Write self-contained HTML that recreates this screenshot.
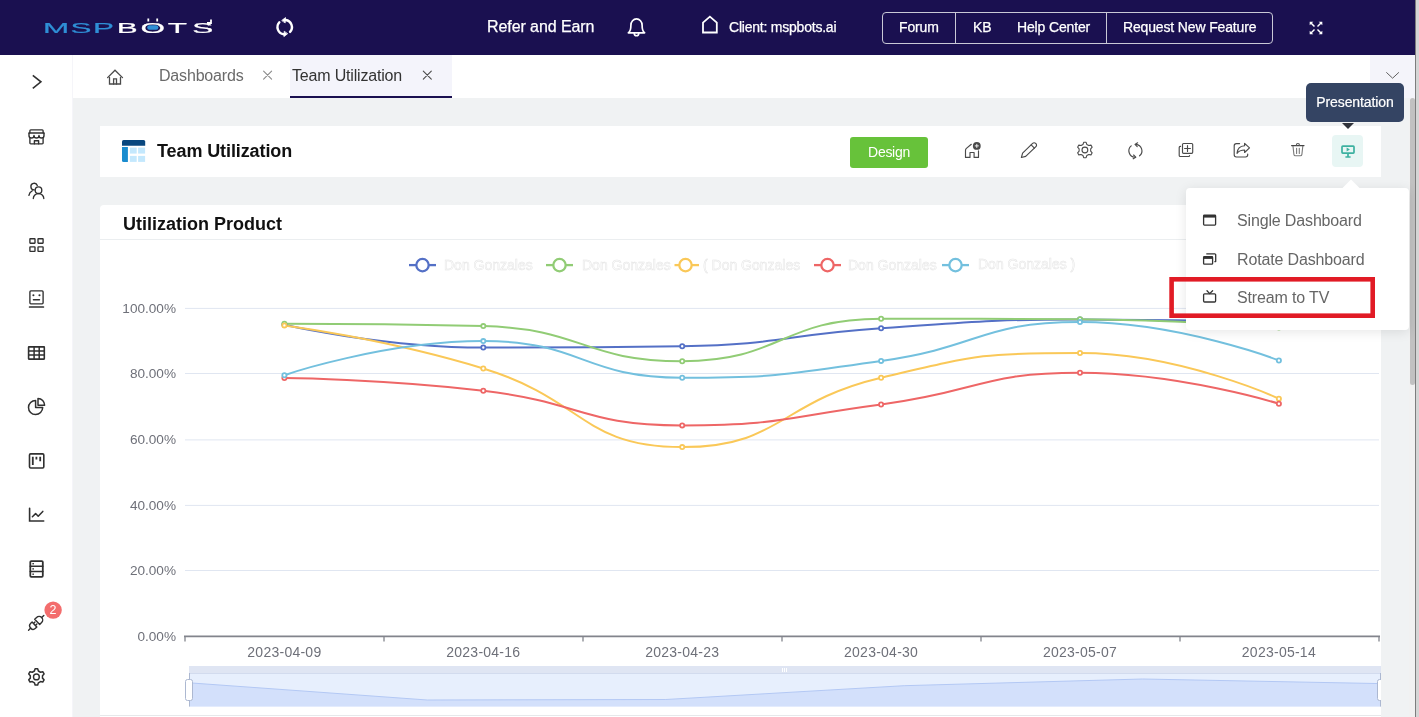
<!DOCTYPE html>
<html lang="en">
<head>
<meta charset="utf-8">
<title>Team Utilization - MSPbots</title>
<style>
*{box-sizing:border-box;margin:0;padding:0}
html,body{width:1419px;height:717px;overflow:hidden;background:#fff;font-family:"Liberation Sans",sans-serif;color:#333}
#app{position:relative;width:1419px;height:717px;overflow:hidden;background:#f0f2f3;will-change:transform}
.abs{position:absolute}
/* header */
#hdr{position:absolute;left:0;top:0;width:1415px;height:55px;background:#1a1050;color:#fff}
#hdr .t{position:absolute;white-space:nowrap;color:#fff;letter-spacing:-0.15px;-webkit-text-stroke:.25px #fff}
#btns{position:absolute;left:882px;top:12px;width:391px;height:32px;border:1px solid #c9c9d6;border-radius:4px}
#btns .dv{position:absolute;top:0;width:1px;height:30px;background:#c9c9d6}
/* right edge */
#redge{position:absolute;left:1415px;top:0;width:4px;height:717px;background:#d5d5d5;border-left:1px solid #7d7d7d}
/* sidebar */
#side{position:absolute;left:0;top:55px;width:73px;height:662px;background:#fff;border-right:1px solid #f5f5f9}
#side svg{position:absolute;left:26px;width:20px;height:20px;fill:none;stroke:#333;stroke-width:1.4;stroke-linecap:round;stroke-linejoin:round}
/* tabs */
#tabs{position:absolute;left:73px;top:55px;width:1342px;height:43px;background:#fff}
#tabs .t{position:absolute;top:11px;font-size:16px;line-height:20px;white-space:nowrap;color:#6a6a6a;letter-spacing:-0.18px}
#tabs .x{position:absolute;top:13px;width:12px;height:12px}
#tabact{position:absolute;left:217px;top:0;width:162px;height:43px;background:#f4f4fb;border-bottom:2px solid #1a1050}
#tabmore{position:absolute;left:1297px;top:0;width:45px;height:43px;background:#f4f4fa}
/* cards */
.card{position:absolute;background:#fff}
#c1{left:100px;top:126px;width:1281px;height:51px}
#c2{left:100px;top:205px;width:1281px;height:512px;border-radius:4px 4px 0 0}
#c2:after{content:"";position:absolute;left:0;top:510px;width:100%;height:1px;background:#e6e8ea}
#c2h{position:absolute;left:0;top:0;width:100%;height:35px;border-bottom:1px solid #ebeef0}
h1{position:absolute;left:57px;top:14px;font-size:18px;line-height:22px;font-weight:bold;color:#111;white-space:nowrap;letter-spacing:-0.1px}
h2{position:absolute;left:23px;top:8px;font-size:18px;line-height:22px;font-weight:bold;color:#111;white-space:nowrap}
#design{position:absolute;left:750px;top:11px;width:78px;height:31px;background:#67c23a;border-radius:3px;color:#fff;font-size:14px;line-height:31px;text-align:center;letter-spacing:-0.3px}
.tb{position:absolute;top:15px;width:20px;height:20px;fill:none;stroke:#555;stroke-width:1.2;stroke-linecap:round;stroke-linejoin:round}
#pres{position:absolute;left:1232px;top:9px;width:31px;height:32px;background:#e8f6f4;border-radius:4px}
/* tooltip */
#tip{position:absolute;left:1306px;top:83px;width:98px;height:39px;background:#344463;border-radius:5px;color:#fff;font-size:14px;line-height:39px;text-align:center;letter-spacing:-0.1px;-webkit-text-stroke:.2px #fff}
#tip:after{content:"";position:absolute;left:36px;top:40px;border:6px solid transparent;border-top:6px solid #30333b;border-bottom:0}
/* dropdown */
#dd{position:absolute;left:1186px;top:188px;width:223px;height:142px;background:#fff;border-radius:4px;box-shadow:0 2px 12px rgba(0,0,0,.10)}
#dd:before{content:"";position:absolute;left:159px;top:-6px;width:12px;height:12px;background:#fff;transform:rotate(45deg)}
#dd .i{position:absolute;left:51px;font-size:16px;line-height:20px;color:#666;white-space:nowrap;letter-spacing:-0.15px}
#dd svg{position:absolute;left:16px;width:16px;height:16px;fill:none;stroke:#444;stroke-width:1.3}
#red{position:absolute;left:1169px;top:278px;width:205px;height:39px;border:4px solid #dc1f26}
/* scrollbar */
#sbt{position:absolute;left:1409px;top:98px;width:6px;height:619px;background:#f1f1f1}
#sb{position:absolute;left:1410px;top:98px;width:5px;height:287px;background:#c1c1c1;border-radius:3px}
</style>
</head>
<body>
<div id="app">

<!-- HEADER -->
<div id="hdr">
  <svg class="abs" style="left:0;top:0" width="230" height="55" viewBox="0 0 230 55" font-family="Liberation Sans, sans-serif" font-size="15.2" stroke-width=".35" vector-effect="non-scaling-stroke">
    <text transform="scale(2.07 1)" y="32.7" stroke-width=".35"><tspan x="20.79 34.01 44.92" fill="#2f8fd6" stroke="#2f8fd6" vector-effect="non-scaling-stroke">MSP</tspan><tspan x="56.37 67.89 81.09 92.83" fill="#fff" stroke="#fff" vector-effect="non-scaling-stroke">BOTS</tspan></text>
    <rect x="147.2" y="25.3" width="11.2" height="4.4" rx="2.2" fill="#2f8fd6"/>
    <path d="M148.3 21.6V18.6M157.2 21.6V18.6M207 23H211V19.6" stroke="#fff" stroke-width="1.8" fill="none"/>
  </svg>
  <div class="t" style="left:487px;top:17px;font-size:16px;line-height:20px;letter-spacing:-0.08px">Refer and Earn</div>
  <div class="t" style="left:729px;top:18px;font-size:14px;line-height:18px;letter-spacing:-0.22px">Client: mspbots.ai</div>
  <div id="btns">
    <div class="dv" style="left:72px"></div>
    <div class="dv" style="left:223px"></div>
    <div class="t" style="left:16px;top:5px;font-size:14px;line-height:18px">Forum</div>
    <div class="t" style="left:90px;top:5px;font-size:14px;line-height:18px">KB</div>
    <div class="t" style="left:134px;top:5px;font-size:14px;line-height:18px">Help Center</div>
    <div class="t" style="left:240px;top:5px;font-size:14px;line-height:18px">Request New Feature</div>
  </div>
</div>

<!-- SIDEBAR -->
<div id="side"></div>

<!-- TABS -->
<div id="tabs">
  <div id="tabact"></div>
  <div id="tabmore"></div>
  <div class="t" style="left:86px">Dashboards</div>
  <div class="t" style="left:219px;color:#333">Team Utilization</div>
</div>

<!-- TITLE CARD -->
<div class="card" id="c1">
  <h1>Team Utilization</h1>
  <div id="design">Design</div>
  <div id="pres"></div>
</div>

<!-- CHART CARD -->
<div class="card" id="c2">
  <div id="c2h"><h2>Utilization Product</h2></div>
</div>

<!--CHART-->
<svg id="chart" class="abs" style="left:0;top:0" width="1419" height="717" viewBox="0 0 1419 717" font-family="Liberation Sans, sans-serif">
<line x1="185" y1="308.4" x2="1379" y2="308.4" stroke="#e0e6f1" stroke-width="1"/>
<line x1="185" y1="373.5" x2="1379" y2="373.5" stroke="#e0e6f1" stroke-width="1"/>
<line x1="185" y1="439.9" x2="1379" y2="439.9" stroke="#e0e6f1" stroke-width="1"/>
<line x1="185" y1="505.4" x2="1379" y2="505.4" stroke="#e0e6f1" stroke-width="1"/>
<line x1="185" y1="570.5" x2="1379" y2="570.5" stroke="#e0e6f1" stroke-width="1"/>
<text x="176" y="312.8" text-anchor="end" font-size="13.6" fill="#6e7079">100.00%</text>
<text x="176" y="378.2" text-anchor="end" font-size="13.6" fill="#6e7079">80.00%</text>
<text x="176" y="444.2" text-anchor="end" font-size="13.6" fill="#6e7079">60.00%</text>
<text x="176" y="509.8" text-anchor="end" font-size="13.6" fill="#6e7079">40.00%</text>
<text x="176" y="575.2" text-anchor="end" font-size="13.6" fill="#6e7079">20.00%</text>
<text x="176" y="640.9" text-anchor="end" font-size="13.6" fill="#6e7079">0.00%</text>
<line x1="184" y1="636.4" x2="1380" y2="636.4" stroke="#82848c" stroke-width="1.6"/>
<line x1="185.0" y1="636.5" x2="185.0" y2="641.5" stroke="#82848c" stroke-width="1.3"/>
<line x1="384.0" y1="636.5" x2="384.0" y2="641.5" stroke="#82848c" stroke-width="1.3"/>
<line x1="583.0" y1="636.5" x2="583.0" y2="641.5" stroke="#82848c" stroke-width="1.3"/>
<line x1="782.0" y1="636.5" x2="782.0" y2="641.5" stroke="#82848c" stroke-width="1.3"/>
<line x1="981.0" y1="636.5" x2="981.0" y2="641.5" stroke="#82848c" stroke-width="1.3"/>
<line x1="1180.0" y1="636.5" x2="1180.0" y2="641.5" stroke="#82848c" stroke-width="1.3"/>
<line x1="1379.0" y1="636.5" x2="1379.0" y2="641.5" stroke="#82848c" stroke-width="1.3"/>
<text x="284.4" y="657" text-anchor="middle" font-size="14" letter-spacing="0.25" fill="#6e7079">2023-04-09</text>
<text x="483.3" y="657" text-anchor="middle" font-size="14" letter-spacing="0.25" fill="#6e7079">2023-04-16</text>
<text x="682.2" y="657" text-anchor="middle" font-size="14" letter-spacing="0.25" fill="#6e7079">2023-04-23</text>
<text x="881.1" y="657" text-anchor="middle" font-size="14" letter-spacing="0.25" fill="#6e7079">2023-04-30</text>
<text x="1080.0" y="657" text-anchor="middle" font-size="14" letter-spacing="0.25" fill="#6e7079">2023-05-07</text>
<text x="1278.9" y="657" text-anchor="middle" font-size="14" letter-spacing="0.25" fill="#6e7079">2023-05-14</text>
<line x1="409.0" y1="265.1" x2="436" y2="265.1" stroke="#5470c6" stroke-width="2.3"/>
<circle cx="422.5" cy="265.1" r="6.2" fill="#fff" stroke="#5470c6" stroke-width="2.3"/>
<text x="444" y="270.0" font-size="14" fill="#fff" stroke="#e4e4e4" stroke-width=".5">Don Gonzales</text>
<line x1="546.0" y1="265.1" x2="573" y2="265.1" stroke="#91cc75" stroke-width="2.3"/>
<circle cx="559.5" cy="265.1" r="6.2" fill="#fff" stroke="#91cc75" stroke-width="2.3"/>
<text x="582" y="270.0" font-size="14" fill="#fff" stroke="#e4e4e4" stroke-width=".5">Don Gonzales</text>
<line x1="674.5" y1="265.1" x2="699" y2="265.1" stroke="#fac858" stroke-width="2.3"/>
<circle cx="685.5" cy="265.1" r="6.2" fill="#fff" stroke="#fac858" stroke-width="2.3"/>
<text x="703" y="270.0" font-size="14" fill="#fff" stroke="#e4e4e4" stroke-width=".5">( Don Gonzales</text>
<line x1="814.0" y1="265.1" x2="841" y2="265.1" stroke="#ee6666" stroke-width="2.3"/>
<circle cx="827.5" cy="265.1" r="6.2" fill="#fff" stroke="#ee6666" stroke-width="2.3"/>
<text x="848" y="270.0" font-size="14" fill="#fff" stroke="#e4e4e4" stroke-width=".5">Don Gonzales</text>
<line x1="942.0" y1="265.1" x2="969" y2="265.1" stroke="#73c0de" stroke-width="2.3"/>
<circle cx="955.5" cy="265.1" r="6.2" fill="#fff" stroke="#73c0de" stroke-width="2.3"/>
<text x="978" y="268.5" font-size="14" fill="#fff" stroke="#e4e4e4" stroke-width=".5">Don Gonzales )</text>
<path d="M284.4 324.8 C284.4 324.8 383.5 347.5 483.3 347.5 C582.4 347.5 582.9 347.5 682.2 346.2 C781.8 344.9 781.5 335.0 881.1 328.3 C980.4 321.7 980.5 319.6 1080.0 319.6 C1179.4 319.6 1278.9 322.5 1278.9 322.5" fill="none" stroke="#5470c6" stroke-width="2" stroke-linejoin="round"/>
<path d="M284.4 323.7 C284.4 323.7 384.6 323.7 483.3 326.1 C583.5 328.5 583.1 361.2 682.2 361.2 C782.0 361.2 780.5 318.7 881.1 318.7 C979.4 318.7 980.6 318.7 1080.0 319.3 C1179.5 319.9 1278.9 327.5 1278.9 327.5" fill="none" stroke="#91cc75" stroke-width="2" stroke-linejoin="round"/>
<path d="M284.4 325.4 C284.4 325.4 386.3 338.8 483.3 368.5 C585.2 399.7 582.0 447.1 682.2 447.1 C780.9 447.1 779.2 401.8 881.1 377.7 C978.1 354.8 981.4 353.0 1080.0 353.0 C1180.3 353.0 1278.9 398.7 1278.9 398.7" fill="none" stroke="#fac858" stroke-width="2" stroke-linejoin="round"/>
<path d="M284.4 378.1 C284.4 378.1 384.5 379.1 483.3 390.8 C583.4 402.7 582.3 425.4 682.2 425.4 C781.2 425.4 782.0 417.6 881.1 404.5 C980.9 391.3 980.5 372.8 1080.0 372.8 C1179.4 372.8 1278.9 403.8 1278.9 403.8" fill="none" stroke="#ee6666" stroke-width="2" stroke-linejoin="round"/>
<path d="M284.4 375.2 C284.4 375.2 384.0 341.1 483.3 341.1 C582.9 341.1 582.1 377.7 682.2 377.7 C781.0 377.7 782.4 374.7 881.1 360.9 C981.3 346.9 980.5 322.1 1080.0 322.1 C1179.4 322.1 1278.9 360.5 1278.9 360.5" fill="none" stroke="#73c0de" stroke-width="2" stroke-linejoin="round"/>
<circle cx="284.4" cy="324.8" r="2.1" fill="#fff" stroke="#5470c6" stroke-width="1.8"/>
<circle cx="483.3" cy="347.5" r="2.1" fill="#fff" stroke="#5470c6" stroke-width="1.8"/>
<circle cx="682.2" cy="346.2" r="2.1" fill="#fff" stroke="#5470c6" stroke-width="1.8"/>
<circle cx="881.1" cy="328.3" r="2.1" fill="#fff" stroke="#5470c6" stroke-width="1.8"/>
<circle cx="1080.0" cy="319.6" r="2.1" fill="#fff" stroke="#5470c6" stroke-width="1.8"/>
<circle cx="1278.9" cy="322.5" r="2.1" fill="#fff" stroke="#5470c6" stroke-width="1.8"/>
<circle cx="284.4" cy="323.7" r="2.1" fill="#fff" stroke="#91cc75" stroke-width="1.8"/>
<circle cx="483.3" cy="326.1" r="2.1" fill="#fff" stroke="#91cc75" stroke-width="1.8"/>
<circle cx="682.2" cy="361.2" r="2.1" fill="#fff" stroke="#91cc75" stroke-width="1.8"/>
<circle cx="881.1" cy="318.7" r="2.1" fill="#fff" stroke="#91cc75" stroke-width="1.8"/>
<circle cx="1080.0" cy="319.3" r="2.1" fill="#fff" stroke="#91cc75" stroke-width="1.8"/>
<circle cx="1278.9" cy="327.5" r="2.1" fill="#fff" stroke="#91cc75" stroke-width="1.8"/>
<circle cx="284.4" cy="325.4" r="2.1" fill="#fff" stroke="#fac858" stroke-width="1.8"/>
<circle cx="483.3" cy="368.5" r="2.1" fill="#fff" stroke="#fac858" stroke-width="1.8"/>
<circle cx="682.2" cy="447.1" r="2.1" fill="#fff" stroke="#fac858" stroke-width="1.8"/>
<circle cx="881.1" cy="377.7" r="2.1" fill="#fff" stroke="#fac858" stroke-width="1.8"/>
<circle cx="1080.0" cy="353.0" r="2.1" fill="#fff" stroke="#fac858" stroke-width="1.8"/>
<circle cx="1278.9" cy="398.7" r="2.1" fill="#fff" stroke="#fac858" stroke-width="1.8"/>
<circle cx="284.4" cy="378.1" r="2.1" fill="#fff" stroke="#ee6666" stroke-width="1.8"/>
<circle cx="483.3" cy="390.8" r="2.1" fill="#fff" stroke="#ee6666" stroke-width="1.8"/>
<circle cx="682.2" cy="425.4" r="2.1" fill="#fff" stroke="#ee6666" stroke-width="1.8"/>
<circle cx="881.1" cy="404.5" r="2.1" fill="#fff" stroke="#ee6666" stroke-width="1.8"/>
<circle cx="1080.0" cy="372.8" r="2.1" fill="#fff" stroke="#ee6666" stroke-width="1.8"/>
<circle cx="1278.9" cy="403.8" r="2.1" fill="#fff" stroke="#ee6666" stroke-width="1.8"/>
<circle cx="284.4" cy="375.2" r="2.1" fill="#fff" stroke="#73c0de" stroke-width="1.8"/>
<circle cx="483.3" cy="341.1" r="2.1" fill="#fff" stroke="#73c0de" stroke-width="1.8"/>
<circle cx="682.2" cy="377.7" r="2.1" fill="#fff" stroke="#73c0de" stroke-width="1.8"/>
<circle cx="881.1" cy="360.9" r="2.1" fill="#fff" stroke="#73c0de" stroke-width="1.8"/>
<circle cx="1080.0" cy="322.1" r="2.1" fill="#fff" stroke="#73c0de" stroke-width="1.8"/>
<circle cx="1278.9" cy="360.5" r="2.1" fill="#fff" stroke="#73c0de" stroke-width="1.8"/>
<clipPath id="cc"><rect x="100" y="205" width="1281" height="512"/></clipPath><g clip-path="url(#cc)">
<rect x="189" y="666" width="1192" height="7.5" fill="#dfe5f3"/>
<rect x="189" y="673.5" width="1192" height="33" fill="#e7effd"/>
<path d="M189 706.5 L189.0 682.8 L427.4 700.0 L665.8 699.5 L904.2 685.7 L1142.6 679.0 L1381.0 683.6 L1381 706.5 Z" fill="#d3e0fb"/>
<path d="M189.0 682.8 L427.4 700.0 L665.8 699.5 L904.2 685.7 L1142.6 679.0 L1381.0 683.6" fill="none" stroke="#b3c8f4" stroke-width="1"/>
<line x1="189" y1="673.5" x2="1381" y2="673.5" stroke="#d2dbee" stroke-width="1"/>
<line x1="189.5" y1="673" x2="189.5" y2="706.5" stroke="#acb8d1" stroke-width="1"/>
<line x1="1380.5" y1="673" x2="1380.5" y2="706.5" stroke="#acb8d1" stroke-width="1"/>
<rect x="185.5" y="679.5" width="7" height="21" rx="2" fill="#fff" stroke="#acb8d1"/>
<rect x="1377.5" y="679.5" width="7" height="21" rx="2" fill="#fff" stroke="#acb8d1"/>
<line x1="782.5" y1="668" x2="782.5" y2="672" stroke="#fff" stroke-width="1"/>
<line x1="784.5" y1="668" x2="784.5" y2="672" stroke="#fff" stroke-width="1"/>
<line x1="786.5" y1="668" x2="786.5" y2="672" stroke="#fff" stroke-width="1"/>
</g></svg>
<!--/CHART-->
<!--IC1-->
<svg id="ic1" class="abs" style="left:0;top:0" width="1419" height="717" viewBox="0 0 1419 717" fill="none" stroke-linecap="round" stroke-linejoin="round">
<g stroke="#fff">
<path d="M285.70 19.97 A7.2 7.2 0 0 1 290.05 31.92" stroke-width="2.4" stroke-linecap="round"/>
<path d="M283.70 34.23 A7.2 7.2 0 0 1 279.35 22.28" stroke-width="2.4" stroke-linecap="round"/>
<path d="M282.0 20.3 L285.5 17.6 L285.2 22.6 Z" fill="#fff" stroke="#fff" stroke-width=".8"/>
<path d="M287.4 33.9 L283.9 36.6 L284.2 31.6 Z" fill="#fff" stroke="#fff" stroke-width=".8"/>
<path d="M628.4 32.8 C630.7 31.2 630.9 28.6 630.9 25.2 a5.6 6.3 0 0 1 11.2 0 C642.1 28.6 642.3 31.2 644.6 32.8 Z" stroke-width="1.7"/>
<path d="M634.2 33.2 a2.3 2.6 0 0 0 4.6 0" stroke-width="1.6"/>
<path d="M703 32.5 V22.6 L709.9 16.6 L716.8 22.6 V32.5 Z" stroke-width="1.8" stroke-linejoin="miter"/>
<path d="M1314.5 26.5 L1311.0 23.0" stroke-width="1.5" stroke-linecap="butt"/>
<path d="M1309.7 21.7 L1313.3 21.7 L1309.7 25.3 Z" fill="#fff" stroke="none"/>
<path d="M1317.5 26.5 L1321.0 23.0" stroke-width="1.5" stroke-linecap="butt"/>
<path d="M1322.3 21.7 L1318.7 21.7 L1322.3 25.3 Z" fill="#fff" stroke="none"/>
<path d="M1314.5 29.5 L1311.0 33.0" stroke-width="1.5" stroke-linecap="butt"/>
<path d="M1309.7 34.3 L1313.3 34.3 L1309.7 30.7 Z" fill="#fff" stroke="none"/>
<path d="M1317.5 29.5 L1321.0 33.0" stroke-width="1.5" stroke-linecap="butt"/>
<path d="M1322.3 34.3 L1318.7 34.3 L1322.3 30.7 Z" fill="#fff" stroke="none"/>
</g>
<g stroke="#303030" stroke-width="1.35">
<path d="M32.8 75.3 L40.9 81.8 L32.8 88.3" stroke-width="1.6" stroke-linejoin="miter" stroke-linecap="butt"/>
<path d="M29.9 137.6 V143 a.9 .9 0 0 0 .9 .9 H42.2 a.9 .9 0 0 0 .9-.9 V137.6"/>
<path d="M29.9 132.8 V130.7 a.9 .9 0 0 1 .9-.9 H42.2 a.9 .9 0 0 1 .9 .9 V132.8"/>
<path d="M29.2 133 H43.8" stroke-width="1.7"/>
<path d="M29 133.2 V135.4 a2.5 2.6 0 0 0 5 0 a2.5 2.6 0 0 0 5 0 a2.5 2.6 0 0 0 5 0 V133.2" stroke-width="1.4"/>
<path d="M34.4 143.8 V140.7 H38.6 V143.8" stroke-width="1.4"/>
<circle cx="38.5" cy="190.2" r="3.3"/>
<path d="M33.3 198.6 a5.25 5.0 0 0 1 10.5 0"/>
<path d="M37.3 185.5 a3.3 3.3 0 1 0 -3.0 4.4"/>
<path d="M28.9 195.3 C29.3 193 30.3 191.6 32.2 190.8"/>
<rect x="29.9" y="238.7" width="5.1" height="4.5" rx=".4"/>
<rect x="29.9" y="246.8" width="5.1" height="4.5" rx=".4"/>
<rect x="38.0" y="238.7" width="5.1" height="4.5" rx=".4"/>
<rect x="38.0" y="246.8" width="5.1" height="4.5" rx=".4"/>
<rect x="29.9" y="290.9" width="13.2" height="12.9" rx="1"/>
<circle cx="33.4" cy="295.3" r="1.05" fill="#303030" stroke="none"/>
<circle cx="39.5" cy="295.3" r="1.05" fill="#303030" stroke="none"/>
<path d="M33.4 299.8 H39.5" stroke-width="1.4"/>
<path d="M29.6 307 H43.4" stroke-width="1.7"/>
<rect x="28.6" y="346.9" width="15.7" height="12.2" rx=".3" stroke-width="1.6"/>
<path d="M34.1 347 V359 M39.2 347 V359 M28.8 350.9 H44.2 M28.8 355.1 H44.2" stroke-width="1.5"/>
<path d="M35.6 400.4 A7.1 7.1 0 1 0 42.7 407.6 H35.6 Z" stroke-width="1.5"/>
<path d="M38.0 398.6 A6.6 6.6 0 0 1 44.6 405.3 H38.0 Z" stroke-width="1.5"/>
<rect x="29.5" y="453.9" width="14.3" height="14.1" rx="1.2" stroke-width="1.6"/>
<path d="M32.8 456.8 V465 M36.4 456.8 V459.4 M40.2 456.8 V461.2" stroke-width="1.8" stroke-linecap="butt"/>
<path d="M29.6 508.3 V521 H43.7" stroke-width="1.6" stroke-linejoin="miter"/>
<path d="M32.4 516.8 L35.6 513.6 L38.2 516.3 L42.8 511.4" stroke-width="1.5"/>
<rect x="30.3" y="561.1" width="12.5" height="15.7" rx="1" stroke-width="1.8"/>
<path d="M30.3 566.3 H42.8 M30.3 571.5 H42.8" stroke-width="1.6"/>
<rect x="32.4" y="563.0" width="1.5" height="1.4" fill="#303030" stroke="none"/>
<rect x="32.4" y="568.2" width="1.5" height="1.4" fill="#303030" stroke="none"/>
<rect x="32.4" y="573.5" width="1.5" height="1.4" fill="#303030" stroke="none"/>
<g transform="translate(36.2 622.8) rotate(-44)" stroke-width="1.4">
<path d="M-10.6 0 H-7.6"/>
<path d="M-2.4 -3.4 H-4.3 a3.4 3.4 0 0 0 0 6.8 H-2.4 Z"/>
<path d="M-2.4 -1.4 H-0.4 M-2.4 1.4 H-0.4"/>
<path d="M1.4 -3.6 H4 a3.6 3.6 0 0 1 0 7.2 H1.4 Z"/>
<path d="M7.6 0 H10.6"/>
</g>
<path d="M34.42 671.02 L35.12 668.80 L37.68 668.80 L38.38 671.02 L40.50 672.25 L42.77 671.74 L44.06 673.96 L42.48 675.67 L42.48 678.13 L44.06 679.84 L42.77 682.06 L40.50 681.55 L38.38 682.78 L37.68 685.00 L35.12 685.00 L34.42 682.78 L32.30 681.55 L30.03 682.06 L28.74 679.84 L30.32 678.13 L30.32 675.67 L28.74 673.96 L30.03 671.74 L32.30 672.25Z" stroke-width="1.5"/>
<circle cx="36.4" cy="676.9" r="2.9" stroke-width="1.4"/>
</g>
<circle cx="53.1" cy="610.1" r="8.7" fill="#f36d6d" stroke="none"/>
<text x="53.1" y="614.4" text-anchor="middle" font-family="Liberation Sans, sans-serif" font-size="12.5" fill="#fff" stroke="none">2</text>
<g stroke="#4a4a4a" stroke-width="1.3">
<path d="M107.6 77.6 L115 70.2 L122.5 77.6" stroke-linejoin="miter"/>
<path d="M109.5 77.4 V84 H120.5 V77.4" stroke-linejoin="miter"/>
<path d="M113.6 84 V78.9 H116.5 V84" stroke-linejoin="miter"/>
</g>
<path d="M263.6 71.1 L271.6 79.1 M271.6 71.1 L263.6 79.1" stroke="#8a8a8a" stroke-width="1.1"/>
<path d="M423.3 71.1 L431.3 79.1 M431.3 71.1 L423.3 79.1" stroke="#4a4a4a" stroke-width="1.1"/>
<path d="M1386.6 72.6 L1392.6 78.2 L1398.6 72.6" stroke="#606060" stroke-width="1" stroke-linejoin="miter"/>
<g stroke="none">
<path d="M122 141.6 a1.6 1.6 0 0 1 1.6-1.6 H143.6 a1.6 1.6 0 0 1 1.6 1.6 V145.7 H122 Z" fill="#08477f"/>
<path d="M122 147 H127.9 V162 H123.6 a1.6 1.6 0 0 1 -1.6-1.6 Z" fill="#1a8ccf"/>
<rect x="129.9" y="147.6" width="6.8" height="6" fill="#c4e8fd"/>
<rect x="138.1" y="147.6" width="7" height="6" fill="#c4e8fd"/>
<rect x="129.9" y="155.9" width="6.8" height="6" fill="#c4e8fd"/>
<rect x="138.1" y="155.9" width="7" height="6" fill="#c4e8fd"/>
</g>
<g stroke="#4a4a4a" stroke-width="1.15">
<path d="M971.3 144.3 L966.4 148.4 Q965.5 149.2 965.5 150.4 V157.4 H970 V152.5 H974.1 V157.4 H978.5 V150.9"/>
<circle cx="976.8" cy="145.9" r="3.9" fill="#4a4a4a" stroke="none"/>
<path d="M974.8 145.9 H978.8 M976.8 143.9 V147.9" stroke="#fff" stroke-width="0.9" stroke-linecap="butt"/>
<path d="M1021.4 157.5 L1022.6 153.2 L1032.6 143.4 a2.1 2.1 0 0 1 3 0 L1035.9 143.7 a2.1 2.1 0 0 1 0 3 L1025.7 156.4 Z"/>
<path d="M1031.2 144.9 L1034.4 148.1"/>
<path d="M1083.02 144.41 L1083.68 142.30 L1086.12 142.30 L1086.78 144.41 L1088.80 145.57 L1090.96 145.09 L1092.18 147.20 L1090.68 148.83 L1090.68 151.17 L1092.18 152.80 L1090.96 154.91 L1088.80 154.43 L1086.78 155.59 L1086.12 157.70 L1083.68 157.70 L1083.02 155.59 L1081.00 154.43 L1078.84 154.91 L1077.62 152.80 L1079.12 151.17 L1079.12 148.83 L1077.62 147.20 L1078.84 145.09 L1081.00 145.57Z" stroke-width="1.1"/>
<circle cx="1084.9" cy="150" r="2.9" stroke-width="1.1"/>
<path d="M1135.97 144.32 A6.5 6.5 0 0 1 1139.58 155.78"/>
<path d="M1134.83 157.28 A6.5 6.5 0 0 1 1131.22 145.82"/>
<path d="M1137.6 142.8 L1135.0 144.4 L1137.2 146.6" />
<path d="M1133.2 158.8 L1135.8 157.2 L1133.6 155.0" />
<rect x="1182.5" y="143.5" width="10.2" height="9.8" rx="1"/>
<path d="M1184.6 148.5 H1190.4 M1187.5 145.6 V151.4"/>
<path d="M1180.6 146.4 H1180.2 a1 1 0 0 0 -1 1 V155.5 a1 1 0 0 0 1 1 H1188.6 a1 1 0 0 0 1-1"/>
<path d="M1239.6 143.6 H1236.4 a2.2 2.2 0 0 0 -2.2 2.2 V154.8 a2.2 2.2 0 0 0 2.2 2.2 H1245.5 a2.2 2.2 0 0 0 2.2-2.2 V154"/>
<path d="M1244.6 143.3 L1249.5 147.8 L1244.6 152.5 V150 C1241.2 150 1238.7 151 1237 153.4 C1237.3 149.2 1240 146.1 1244.6 145.8 Z"/>
</g>
<g stroke="#7a7a7a" stroke-width="1.1">
<path d="M1293 146.2 L1293.9 154.4 a1.6 1.6 0 0 0 1.6 1.4 H1300.3 a1.6 1.6 0 0 0 1.6-1.4 L1302.8 146.2"/>
<path d="M1296.6 148.2 V153.4 M1299.3 148.2 V153.4"/>
<path d="M1291.6 145.6 H1304" stroke="#444" stroke-width="1.2"/>
<path d="M1296.3 145.4 a1.6 1.9 0 0 1 3.2 0" stroke="#555"/>
</g>
<g stroke="#3cb1a0" stroke-width="1.7">
<rect x="1342" y="146.1" width="12" height="7" rx=".8"/>
<path d="M1348 153.5 V156.6 M1345.4 157 H1350.6" stroke-linecap="butt"/>
<path d="M1346.6 147.6 L1349.9 149.6 L1346.6 151.6 Z" fill="#3cb1a0" stroke="none"/>
</g>
</svg>
<!--/IC1-->
<div id="sbt"></div><div id="sb"></div>

<!-- TOOLTIP + DROPDOWN -->
<div id="tip">Presentation</div>
<div id="dd">
  <div class="i" style="top:23px">Single Dashboard</div>
  <div class="i" style="top:62px">Rotate Dashboard</div>
  <div class="i" style="top:100px">Stream to TV</div>
</div>
<!--IC2-->
<svg id="ic2" class="abs" style="left:0;top:0" width="1419" height="717" viewBox="0 0 1419 717" fill="none" stroke-linejoin="round">
<g stroke="#333" stroke-width="1.3">
<rect x="1203.6" y="215.1" width="12" height="10" rx=".8"/>
<path d="M1203.6 216.3 H1215.6" stroke-width="2.6"/>
<rect x="1203.6" y="256.6" width="9" height="7.6" rx=".8"/>
<path d="M1203.6 257.7 H1212.6" stroke-width="2.4"/>
<path d="M1206.3 253.9 H1214.8 a.9 .9 0 0 1 .9 .9 V261.6 H1214.4"/>
<rect x="1203.6" y="293.8" width="12" height="8.2" rx="1"/>
<path d="M1207 290.8 L1209.7 293.6 L1212.6 290.8" stroke-linecap="round"/>
</g>
<rect x="1171.6" y="279.3" width="201.1" height="36.4" stroke="#e11b25" stroke-width="4.6" stroke-linejoin="miter"/>
</svg>
<!--/IC2-->

<div id="redge"></div>
</div>
</body>
</html>
